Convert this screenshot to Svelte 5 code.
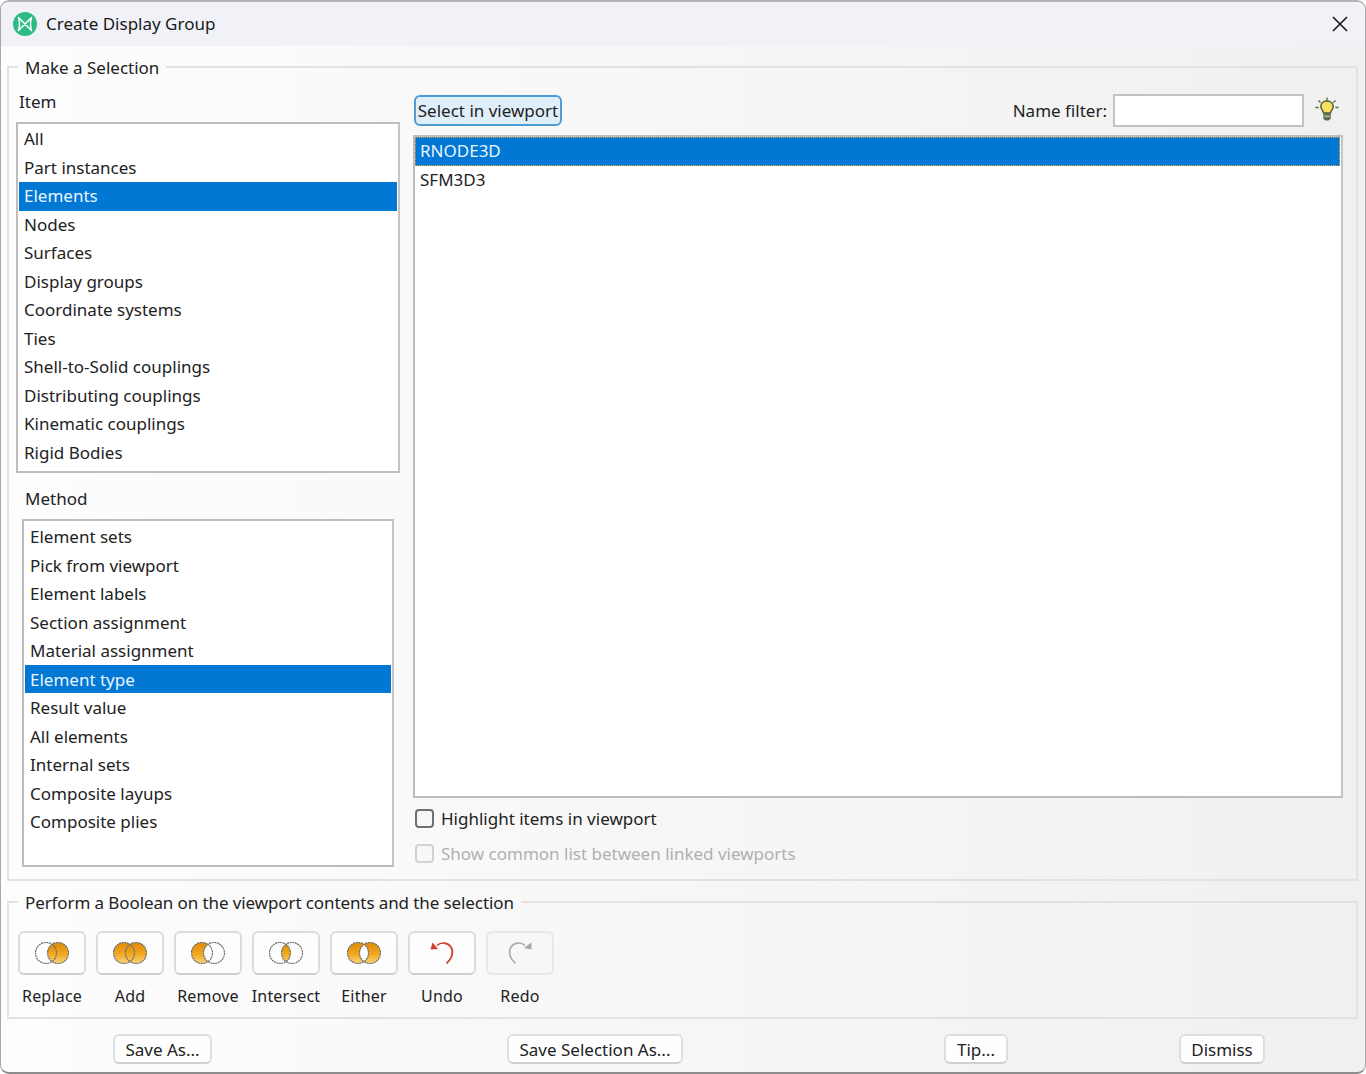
<script lang="ts">
  const items = [
    "All", "Part instances", "Elements", "Nodes", "Surfaces", "Display groups",
    "Coordinate systems", "Ties", "Shell-to-Solid couplings", "Distributing couplings",
    "Kinematic couplings", "Rigid Bodies",
  ];
  const methods = [
    "Element sets", "Pick from viewport", "Element labels", "Section assignment",
    "Material assignment", "Element type", "Result value", "All elements",
    "Internal sets", "Composite layups", "Composite plies",
  ];
  const booleans = ["Replace", "Add", "Remove", "Intersect", "Either"];
</script>

<div class="window">
  <header class="titlebar">
    <svg class="logo" width="24" height="24" viewBox="0 0 24 24">
      <circle cx="12" cy="12" r="12" fill="#2dbb84" />
      <path d="M5.5 5.5 L18.5 18.5 Q16.5 12 18.5 5.5 L5.5 18.5 Q7.5 12 5.5 5.5 Z" fill="none" stroke="#fff" stroke-width="1.5" stroke-linejoin="round" />
    </svg>
    <span class="title">Create Display Group</span>
    <svg class="close" width="16" height="16" viewBox="0 0 16 16">
      <path d="M1 1 L15 15 M15 1 L1 15" stroke="#111" stroke-width="1.5" fill="none" />
    </svg>
  </header>

  <svg class="defs" width="0" height="0">
    <defs>
      <linearGradient id="orange" x1="0" y1="0" x2="0" y2="1">
        <stop offset="0" stop-color="#e08a08" />
        <stop offset="0.55" stop-color="#f0a81f" />
        <stop offset="1" stop-color="#fad47c" />
      </linearGradient>
      <clipPath id="clipLeft"><circle cx="11" cy="11" r="10.5" /></clipPath>
    </defs>
  </svg>

  <fieldset class="group selection">
    <legend>Make a Selection</legend>
    <div class="columns">
      <div class="left">
        <div class="label item-label">Item</div>
        <ul class="list item-list">
          {#each items as item}
            <li class:selected={item === "Elements"}>{item}</li>
          {/each}
        </ul>
        <div class="label method-label">Method</div>
        <ul class="list method-list">
          {#each methods as method}
            <li class:selected={method === "Element type"}>{method}</li>
          {/each}
        </ul>
      </div>

      <div class="right">
        <div class="toolbar">
          <button class="viewport-btn">Select in viewport</button>
          <span class="spacer"></span>
          <span class="filter-label">Name filter:</span>
          <input class="filter" type="text" />
          <svg class="bulb" width="26" height="26" viewBox="0 0 26 26">
            <path d="M13 1.5v3M4.5 4.5l2 2M21.5 4.5l-2 2M1.5 11.5h3M21.5 11.5h3" stroke="#55663a" stroke-width="1.3" fill="none" />
            <path d="M9.5 17 C9.5 14.5 6.8 13.5 6.8 10.6 C6.8 7.2 9.5 5 13 5 C16.5 5 19.2 7.2 19.2 10.6 C19.2 13.5 16.5 14.5 16.5 17 Z" fill="#f7df63" stroke="#49592c" stroke-width="1.4" />
            <path d="M9.8 18.2h6.4v4.2l-1.4 1.6h-3.6l-1.4-1.6z" fill="#66775a" stroke="#3f4f33" stroke-width="0.8" />
            <path d="M10 20.2h6" stroke="#d9dfd0" stroke-width="0.9" />
          </svg>
        </div>
        <ul class="list type-list">
          <li class="selected focused">RNODE3D</li>
          <li>SFM3D3</li>
        </ul>
        <label class="check first">
          <input type="checkbox" />
          <span>Highlight items in viewport</span>
        </label>
        <label class="check second disabled">
          <input type="checkbox" disabled />
          <span>Show common list between linked viewports</span>
        </label>
      </div>
    </div>
  </fieldset>

  <fieldset class="group boolean">
    <legend>Perform a Boolean on the viewport contents and the selection</legend>
    <div class="tools">
      {#each booleans as name}
        <div class="tool">
          <button class="icon-btn" aria-label={name}>
            <svg width="34" height="22" viewBox="0 0 34 22">
              {#if name === "Replace"}
                <circle cx="23" cy="11" r="10.5" fill="url(#orange)" />
              {:else if name === "Add"}
                <circle cx="11" cy="11" r="10.5" fill="url(#orange)" />
                <circle cx="23" cy="11" r="10.5" fill="url(#orange)" />
              {:else if name === "Remove"}
                <circle cx="11" cy="11" r="10.5" fill="url(#orange)" />
                <circle cx="23" cy="11" r="10.5" fill="#fdfdfd" />
              {:else if name === "Intersect"}
                <circle cx="23" cy="11" r="10.5" fill="url(#orange)" clip-path="url(#clipLeft)" />
              {:else}
                <circle cx="11" cy="11" r="10.5" fill="url(#orange)" />
                <circle cx="23" cy="11" r="10.5" fill="url(#orange)" />
                <circle cx="23" cy="11" r="10.5" fill="#fdfdfd" clip-path="url(#clipLeft)" />
              {/if}
              <circle class="ring" cx="11" cy="11" r="10.5" />
              <circle class="ring" cx="23" cy="11" r="10.5" />
            </svg>
          </button>
          <span class="tool-label">{name}</span>
        </div>
      {/each}
      <div class="tool">
        <button class="icon-btn" aria-label="Undo">
          <svg width="28" height="26" viewBox="0 0 28 26">
            <path d="M9 5.5 C13 1.5 20 2.5 23 7 C26 12 24 19 18.5 23.5" fill="none" stroke="#d2402c" stroke-width="1.7" />
            <path d="M2.5 9.5 L4.5 2.5 L10 9 Z" fill="#d2402c" />
          </svg>
        </button>
        <span class="tool-label">Undo</span>
      </div>
      <div class="tool">
        <button class="icon-btn off" aria-label="Redo">
          <svg width="28" height="26" viewBox="0 0 28 26">
            <path d="M19 5.5 C15 1.5 8 2.5 5 7 C2 12 4 19 9.5 23.5" fill="none" stroke="#a8a8a8" stroke-width="1.5" />
            <path d="M25.5 9.5 L25.5 2.5 L18 8 Z" fill="#a8a8a8" />
          </svg>
        </button>
        <span class="tool-label">Redo</span>
      </div>
    </div>
  </fieldset>

  <footer class="actions">
    <button class="action save-as">Save As...</button>
    <button class="action save-sel">Save Selection As...</button>
    <button class="action tip">Tip...</button>
    <button class="action dismiss">Dismiss</button>
  </footer>
</div>

<style>
  :global(body) {
    margin: 0;
    background: #fff;
  }

  .window {
    width: 1366px;
    height: 1074px;
    box-sizing: border-box;
    border: 1px solid #a8a8a8;
    border-top: 2px solid #b4b4b4;
    border-bottom: 2px solid #8c8c8c;
    border-radius: 9px;
    overflow: hidden;
    background: linear-gradient(90deg, #fdfdfd 0%, #f0f0f0 100%);
    font-family: "Noto Sans", "Open Sans", sans-serif;
    font-size: 17px;
    color: #222;
    display: flex;
    flex-direction: column;
  }

  .titlebar {
    height: 44px;
    box-sizing: border-box;
    flex: none;
    background: #f1f2f8;
    display: flex;
    align-items: center;
    padding: 0 17px 2px 12px;
  }

  .logo {
    margin-right: 9px;
    margin-top: 1px;
  }

  .title {
    font-size: 17px;
    color: #1a1a1a;
    flex: 1;
  }

  .close {
    margin-top: 1px;
  }

  .defs {
    position: absolute;
  }

  .group {
    margin: 9px 7px 0 6px;
    padding: 0;
    border: 2px solid #e2e2e2;
    min-width: 0;
  }

  .group legend {
    margin-left: 9px;
    padding: 2px 7px 0;
    line-height: 22px;
    font-size: 17px;
  }

  .selection {
    height: 826px;
    box-sizing: border-box;
  }

  .boolean {
    height: 129px;
    box-sizing: border-box;
  }

  .boolean legend {
    letter-spacing: -0.1px;
  }

  .columns {
    display: flex;
    padding-left: 7px;
    padding-top: 12px;
  }

  .left {
    width: 384px;
    flex: none;
  }

  .label {
    line-height: 22px;
  }

  .item-label {
    padding-left: 3px;
    margin-bottom: 9px;
  }

  .method-label {
    padding-left: 9px;
    margin-top: 15px;
    margin-bottom: 9px;
  }

  .list {
    list-style: none;
    margin: 0;
    padding: 0 1px 0 0;
    background: #fff;
    border: 2px solid #bdbdbd;
    box-sizing: border-box;
    border-right-color: #c4c4c4;
  }

  .list li {
    height: 28.5px;
    line-height: 28.5px;
    padding-left: 5px;
    box-sizing: border-box;
    white-space: nowrap;
  }

  .list li.selected {
    background: #0078d4;
    color: #eaf4ff;
  }

  .list li.focused {
    outline: 1px dotted #f0a040;
    outline-offset: -1px;
  }

  .item-list {
    height: 351px;
    padding-top: 1px;
    padding-left: 1px;
  }

  .method-list {
    width: 372px;
    height: 348px;
    margin-left: 6px;
    padding-top: 1px;
    padding-left: 1px;
  }

  .method-list li {
    padding-top: 1px;
  }

  .right {
    width: 930px;
    margin-left: 13px;
    flex: none;
    padding-top: 3px;
  }

  .toolbar {
    display: flex;
    align-items: center;
    height: 33px;
    padding-right: 2px;
  }

  .spacer {
    flex: 1;
  }

  button {
    font-family: inherit;
    font-size: 17px;
    color: #222;
  }

  .viewport-btn {
    margin-left: 1px;
    width: 148px;
    height: 31px;
    padding: 0;
    background: #e0eefa;
    border: 2px solid #4f9bd6;
    border-radius: 6px;
    white-space: nowrap;
  }

  .filter-label {
    margin-right: 6px;
  }

  .filter {
    width: 191px;
    height: 33px;
    box-sizing: border-box;
    border: 2px solid #c2c2c6;
    background: #fff;
    margin: 0 10px 0 0;
    padding: 0;
  }

  .bulb {
    margin-right: 1px;
    margin-top: -3px;
  }

  .type-list {
    margin-top: 8px;
    height: 663px;
    padding-right: 0;
  }

  .type-list li {
    padding-left: 5px;
    margin-right: 1px;
  }

  .check {
    display: flex;
    align-items: center;
    height: 20px;
    padding-left: 2px;
  }

  .check.first {
    margin-top: 10px;
  }

  .check.second {
    margin-top: 15px;
  }

  .check input {
    appearance: none;
    width: 19px;
    height: 19px;
    margin: 0 7px 0 0;
    box-sizing: border-box;
    border: 2px solid #6f6f6f;
    border-radius: 4px;
    background: #f6f6f6;
  }

  .check.disabled input {
    border-color: #d2d2d2;
    background: #f8f8f8;
  }

  .check.disabled span {
    color: #b0b0b0;
  }

  .tools {
    display: flex;
    gap: 10px;
    padding-left: 9px;
    padding-top: 17px;
  }

  .tool {
    width: 68px;
    display: flex;
    flex-direction: column;
    align-items: center;
  }

  .icon-btn {
    width: 68px;
    height: 44px;
    padding: 0;
    background: #fdfdfd;
    border: 2px solid #dcdcdc;
    border-bottom-color: #cfcfcf;
    border-radius: 6px;
    display: flex;
    align-items: center;
    justify-content: center;
  }

  .icon-btn.off {
    background: #f7f7f7;
    border-color: #e8e8e8;
  }

  .ring {
    fill: none;
    stroke: #6e6e6e;
    stroke-width: 1.2;
    stroke-dasharray: 2 0.6;
  }

  .tool-label {
    margin-top: 10px;
    line-height: 22px;
    font-size: 16px;
    letter-spacing: 0.2px;
    white-space: nowrap;
  }

  .actions {
    display: flex;
    align-items: flex-start;
    padding-left: 112px;
    padding-top: 15px;
  }

  .action {
    height: 30px;
    padding: 0;
    background: #fefefe;
    border: 2px solid #dedede;
    border-bottom-color: #d0d0d0;
    border-radius: 6px;
    white-space: nowrap;
  }

  .save-as {
    width: 99px;
  }

  .save-sel {
    width: 176px;
    margin-left: 295px;
  }

  .tip {
    width: 64px;
    margin-left: 261px;
  }

  .dismiss {
    width: 86px;
    margin-left: 171px;
  }
</style>
